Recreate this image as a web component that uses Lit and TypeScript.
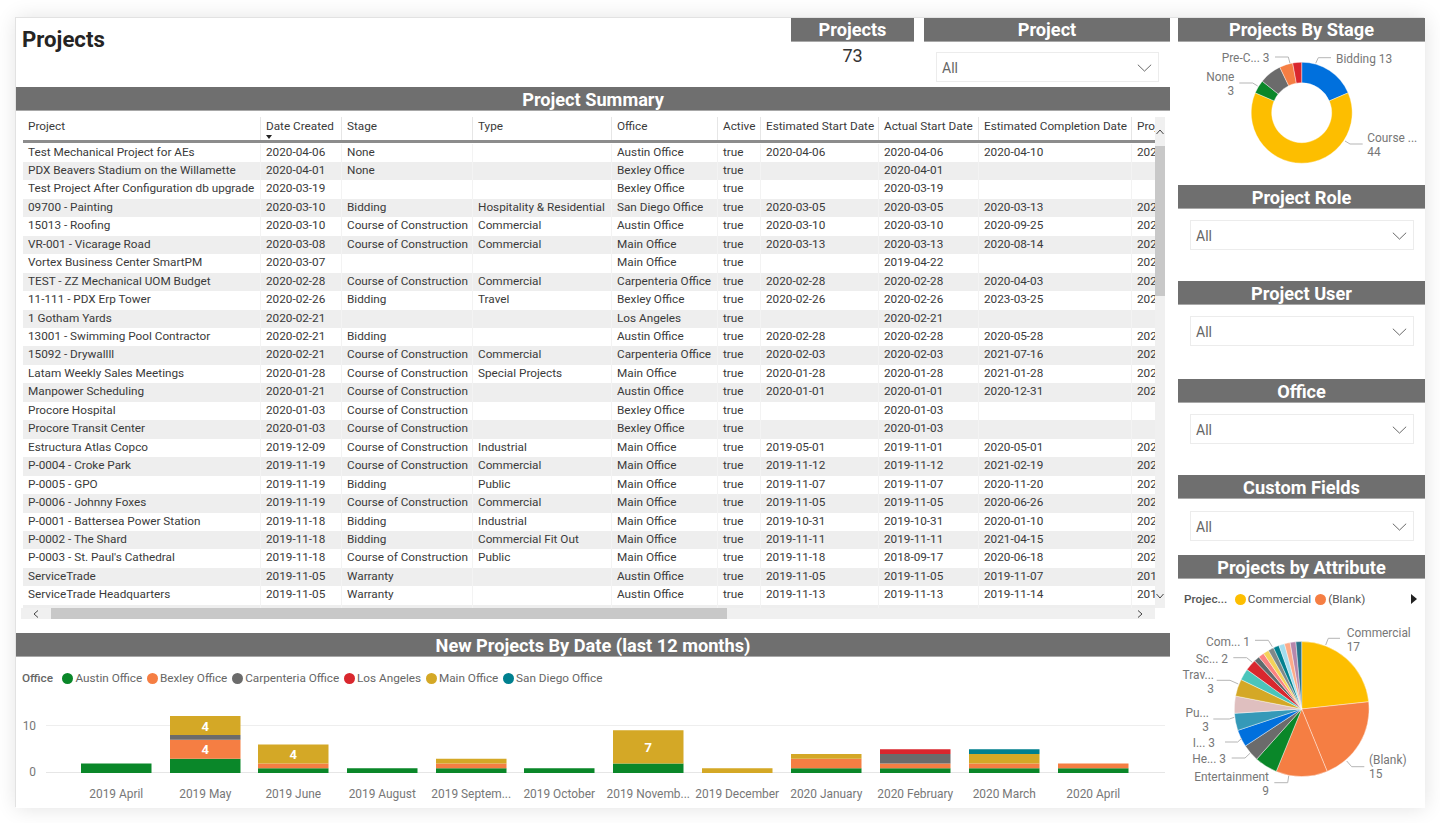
import {LitElement, html, css, svg} from 'lit';
import {customElement} from 'lit/decorators.js';

const COC = 'Course of Construction';
// project|created|stage|type|office|active|est start|act start|est completion|next column (cut off)
const ROWS = [
  ['Test Mechanical Project for AEs', '2020-04-06', 'None', '', 'Austin Office', 'true', '2020-04-06', '2020-04-06', '2020-04-10', '202'],
  ['PDX Beavers Stadium on the Willamette', '2020-04-01', 'None', '', 'Bexley Office', 'true', '', '2020-04-01', '', ''],
  ['Test Project After Configuration db upgrade', '2020-03-19', '', '', 'Bexley Office', 'true', '', '2020-03-19', '', ''],
  ['09700 - Painting', '2020-03-10', 'Bidding', 'Hospitality & Residential', 'San Diego Office', 'true', '2020-03-05', '2020-03-05', '2020-03-13', '202'],
  ['15013 - Roofing', '2020-03-10', COC, 'Commercial', 'Austin Office', 'true', '2020-03-10', '2020-03-10', '2020-09-25', '202'],
  ['VR-001 - Vicarage Road', '2020-03-08', COC, 'Commercial', 'Main Office', 'true', '2020-03-13', '2020-03-13', '2020-08-14', '202'],
  ['Vortex Business Center SmartPM', '2020-03-07', '', '', 'Main Office', 'true', '', '2019-04-22', '', '202'],
  ['TEST - ZZ Mechanical UOM Budget', '2020-02-28', COC, 'Commercial', 'Carpenteria Office', 'true', '2020-02-28', '2020-02-28', '2020-04-03', '202'],
  ['11-111 - PDX Erp Tower', '2020-02-26', 'Bidding', 'Travel', 'Bexley Office', 'true', '2020-02-26', '2020-02-26', '2023-03-25', '202'],
  ['1 Gotham Yards', '2020-02-21', '', '', 'Los Angeles', 'true', '', '2020-02-21', '', ''],
  ['13001 - Swimming Pool Contractor', '2020-02-21', 'Bidding', '', 'Austin Office', 'true', '2020-02-28', '2020-02-28', '2020-05-28', '202'],
  ['15092 - Drywallll', '2020-02-21', COC, 'Commercial', 'Carpenteria Office', 'true', '2020-02-03', '2020-02-03', '2021-07-16', '202'],
  ['Latam Weekly Sales Meetings', '2020-01-28', COC, 'Special Projects', 'Main Office', 'true', '2020-01-28', '2020-01-28', '2021-01-28', '202'],
  ['Manpower Scheduling', '2020-01-21', COC, '', 'Austin Office', 'true', '2020-01-01', '2020-01-01', '2020-12-31', '202'],
  ['Procore Hospital', '2020-01-03', COC, '', 'Bexley Office', 'true', '', '2020-01-03', '', ''],
  ['Procore Transit Center', '2020-01-03', COC, '', 'Bexley Office', 'true', '', '2020-01-03', '', ''],
  ['Estructura Atlas Copco', '2019-12-09', COC, 'Industrial', 'Main Office', 'true', '2019-05-01', '2019-11-01', '2020-05-01', '202'],
  ['P-0004 - Croke Park', '2019-11-19', COC, 'Commercial', 'Main Office', 'true', '2019-11-12', '2019-11-12', '2021-02-19', '202'],
  ['P-0005 - GPO', '2019-11-19', 'Bidding', 'Public', 'Main Office', 'true', '2019-11-07', '2019-11-07', '2020-11-20', '202'],
  ['P-0006 - Johnny Foxes', '2019-11-19', COC, 'Commercial', 'Main Office', 'true', '2019-11-05', '2019-11-05', '2020-06-26', '202'],
  ['P-0001 - Battersea Power Station', '2019-11-18', 'Bidding', 'Industrial', 'Main Office', 'true', '2019-10-31', '2019-10-31', '2020-01-10', '202'],
  ['P-0002 - The Shard', '2019-11-18', 'Bidding', 'Commercial Fit Out', 'Main Office', 'true', '2019-11-11', '2019-11-11', '2021-04-15', '202'],
  ["P-0003 - St. Paul's Cathedral", '2019-11-18', COC, 'Public', 'Main Office', 'true', '2019-11-18', '2018-09-17', '2020-06-18', '202'],
  ['ServiceTrade', '2019-11-05', 'Warranty', '', 'Austin Office', 'true', '2019-11-05', '2019-11-05', '2019-11-07', '201'],
  ['ServiceTrade Headquarters', '2019-11-05', 'Warranty', '', 'Austin Office', 'true', '2019-11-13', '2019-11-13', '2019-11-14', '201'],
  ['', '', '', '', '', '', '', '', '', ''],
];
const COLUMNS = ['Project', 'Date Created', 'Stage', 'Type', 'Office', 'Active', 'Estimated Start Date', 'Actual Start Date', 'Estimated Completion Date', 'Project'];

const GREEN = '#0a8729', ORANGE = '#f57e43', GREY = '#6b6b6b', RED = '#d9272e', GOLD = '#d4a826', TEAL = '#00808f';
const OFFICES = [['Austin Office', GREEN], ['Bexley Office', ORANGE], ['Carpenteria Office', GREY], ['Los Angeles', RED], ['Main Office', GOLD], ['San Diego Office', TEAL]];
const MONTHS: [string, number, [string, number][]][] = [
  ['2019 April', 81, [[GREEN, 2]]],
  ['2019 May', 170, [[GREEN, 3], [ORANGE, 4], [GREY, 1], [GOLD, 4]]],
  ['2019 June', 258, [[GREEN, 1], [ORANGE, 1], [GOLD, 4]]],
  ['2019 August', 347, [[GREEN, 1]]],
  ['2019 Septem...', 436, [[GREEN, 1], [ORANGE, 1], [GOLD, 1]]],
  ['2019 October', 524, [[GREEN, 1]]],
  ['2019 Novemb...', 613, [[GREEN, 2], [GOLD, 7]]],
  ['2019 December', 702, [[GOLD, 1]]],
  ['2020 January', 791, [[GREEN, 1], [ORANGE, 2], [GOLD, 1]]],
  ['2020 February', 880, [[GREEN, 1], [ORANGE, 1], [GREY, 2], [RED, 1]]],
  ['2020 March', 969, [[GREEN, 1], [ORANGE, 1], [GOLD, 2], [TEAL, 1]]],
  ['2020 April', 1058, [[GREEN, 1], [ORANGE, 1]]],
];

const STAGES: [number, string][] = [[13, '#0070dd'], [44, '#fdbe00'], [3, GREEN], [5, GREY], [3, ORANGE], [2, RED]];
const ATTRIBUTES: [number, string][] = [
  [17, '#fdbe00'], [15, ORANGE], [9, ORANGE], [4, GREEN], [3, GREY], [3, '#0070dd'], [3, '#3599b8'], [3, '#dfbfbf'], [3, GOLD],
  [2, '#4ac5bb'], [2, RED], [1, '#5f6b6d'], [1, '#fb8281'], [1, '#f4d25a'], [1, '#7f898a'], [1, '#00808f'], [1, '#a4ddee'], [1, '#fdab89'], [1, '#b687ac'], [1, '#28738a'],
];

function slices(data: [number, string][], cx: number, cy: number, r: number, inner = 0) {
  const total = data.reduce((sum, d) => sum + d[0], 0);
  const pt = (a: number, rad: number) => `${(cx + rad * Math.sin(a)).toFixed(2)} ${(cy - rad * Math.cos(a)).toFixed(2)}`;
  let from = 0;
  return data.map(([value, color]) => {
    const to = from + value / total * Math.PI * 2;
    const big = to - from > Math.PI ? 1 : 0;
    const d = inner
      ? `M${pt(from, r)}A${r} ${r} 0 ${big} 1 ${pt(to, r)}L${pt(to, inner)}A${inner} ${inner} 0 ${big} 0 ${pt(from, inner)}Z`
      : `M${cx} ${cy}L${pt(from, r)}A${r} ${r} 0 ${big} 1 ${pt(to, r)}Z`;
    from = to;
    return svg`<path d=${d} fill=${color} stroke="#fff" stroke-width=".4"></path>`;
  });
}

const chevron = () => html`<svg class="chev" viewBox="0 0 16 9"><path d="M.5 .8 8 8 15.5 .8" fill="none" stroke="#555" stroke-width="1"></path></svg>`;
const dropdown = () => html`<div class="drop"><span>All</span>${chevron()}</div>`;

@customElement('app-root')
export class AppRoot extends LitElement {
  static styles = css`
    :host {
      display: block;
      width: 1440px;
      height: 823px;
      overflow: hidden;
      background: #fff;
      font-family: Roboto, "Open Sans", sans-serif;
      color: #3a3a3a;
    }
    .page {
      display: grid;
      grid-template-columns: 1154px 247px;
      column-gap: 8px;
      width: 1409px;
      height: 790px;
      margin: 18px 0 0 16px;
      background: #fff;
      box-shadow: -1px -1px 0 #e2e2e2, 0 0 20px rgba(0, 0, 0, .12);
      overflow: hidden;
    }
    .bar {
      height: 23px;
      line-height: 26px;
      overflow: hidden;
      background: #6f6f6f;
      border-bottom: 1px solid #a8a8a8;
      color: #fff;
      font-size: 18.2px;
      font-weight: 700;
      text-align: center;
      white-space: nowrap;
    }
    .top .bar, .stage .bar { line-height: 24px; }
    .top {
      display: flex;
      height: 69px;
    }
    .title {
      flex: 1;
      padding: 6px 0 0 6px;
      font-size: 22.2px;
      font-weight: 700;
      line-height: 30px;
      color: #252423;
    }
    .kpi { width: 123px; }
    .kpi .value {
      padding-top: 3px;
      font-size: 18px;
      line-height: 22px;
      text-align: center;
      color: #333;
    }
    .slicer { width: 246px; margin-left: 10px; }
    .slicer .drop { margin: 10px 11px 0 12px; }
    .drop {
      display: flex;
      align-items: center;
      justify-content: space-between;
      box-sizing: border-box;
      height: 30px;
      padding: 2px 6px 0 5px;
      border: 1px solid #ececec;
      font-size: 14px;
      color: #666;
    }
    .chev { width: 15px; height: 8px; }

    .table-area {
      display: flex;
      height: 491px;
      padding: 6px 4px 0 7px;
    }
    .grid {
      width: 1132px;
      overflow: hidden;
    }
    .row {
      display: grid;
      grid-template-columns: 237px 81px 131px 139px 106px 43px 118px 100px 153px 24px;
      font-size: 11.75px;
    }
    .row > div {
      overflow: hidden;
      white-space: nowrap;
      padding-left: 5px;
      box-sizing: border-box;
      border-left: 1px solid #f3f3f3;
    }
    .row > div:first-child { border-left: 0; }
    .head {
      height: 26px;
      border-bottom: 3px solid #8c8c8c;
      box-sizing: border-box;
    }
    .head > div {
      line-height: 19px;
      border-left: 1px solid #e6e6e6;
      position: relative;
    }
    .caret {
      position: absolute;
      left: 5px;
      top: 18px;
      width: 0;
      height: 0;
      border: 3.5px solid transparent;
      border-top: 4px solid #222;
      border-bottom: 0;
    }
    .body .row {
      height: 18.46px;
      line-height: 17px;
    }
    .body { padding-top: .5px; height: 466px; overflow: hidden; }
    .body .row:nth-child(even) { background: #eeeeee; }
    .vscroll {
      display: flex;
      flex-direction: column;
      width: 10px;
      background: #f0f0f0;
      align-items: stretch;
    }
    .arrow {
      display: flex;
      align-items: center;
      justify-content: center;
    }
    .arrow svg { width: 8px; height: 8px; }
    .vscroll .up { height: 29px; }
    .vscroll .thumb { height: 150px; background: #c8c8c8; }
    .vscroll .rest { flex: 1; }
    .vscroll .down { height: 24px; }
    .hscroll {
      display: flex;
      height: 11px;
      width: 1134px;
      margin: 0 0 14px 5px;
      background: #f0f0f0;
    }
    .hscroll .left { width: 30px; }
    .hscroll .thumb { width: 676px; background: #c8c8c8; }
    .hscroll .rest { flex: 1; }
    .hscroll .right { width: 30px; }

    .legend {
      display: flex;
      align-items: center;
      height: 42px;
      padding: 0 0 0 6px;
      font-size: 11.75px;
      color: #666;
      white-space: nowrap;
    }
    .legend b { font-weight: 500; margin-right: 7px; }
    .legend .item { display: flex; align-items: center; margin: 0 2.4px; }
    .dot {
      width: 11px;
      height: 11px;
      border-radius: 50%;
      margin-right: 2px;
    }
    svg.chart {
      display: block;
      font-family: Roboto, sans-serif;
      font-size: 11.9px;
      fill: #777;
    }
    .leader { fill: none; stroke: #b5b5b5; stroke-width: 1; }
    .seg-label { fill: #fff; font-weight: 700; font-size: 13px; text-anchor: middle; }
    .axis { text-anchor: middle; }

    .stage { height: 167px; }
    .sec96 { height: 96px; }
    .sec98 { height: 98px; }
    .sec80 { height: 80px; }
    .sec96 .drop, .sec98 .drop, .sec80 .drop { margin: 11px 11px 0 12px; }
    .sec80 .drop { margin-top: 12px; }
    .legend.attr { height: 40px; padding-right: 8px; color: #555; }
    .legend.attr b { margin-right: 5.500px; }
    .legend.attr .item { margin: 0 2px; }
    .legend.attr .next { margin-left: auto; }
  `;

  private renderRow(row: string[]) {
    return html`<div class="row">${row.map((c) => html`<div>${c}</div>`)}</div>`;
  }

  private renderTable() {
    return html`
      <div class="table-area">
        <div class="grid">
          <div class="row head">
            ${COLUMNS.map((c, i) => html`<div>${c}${i === 1 ? html`<span class="caret"></span>` : ''}</div>`)}
          </div>
          <div class="body">${ROWS.map((r) => this.renderRow(r))}</div>
        </div>
        <div class="vscroll">
          <div class="arrow up"><svg viewBox="0 0 8 8"><path d="M.5 6 4 2 7.500 6" fill="none" stroke="#444"></path></svg></div>
          <div class="thumb"></div>
          <div class="rest"></div>
          <div class="arrow down"><svg viewBox="0 0 8 8"><path d="M.5 2 4 6 7.500 2" fill="none" stroke="#444"></path></svg></div>
        </div>
      </div>
      <div class="hscroll">
        <div class="arrow left"><svg viewBox="0 0 8 8"><path d="M6 .5 2 4 6 7.500" fill="none" stroke="#444"></path></svg></div>
        <div class="thumb"></div>
        <div class="rest"></div>
        <div class="arrow right"><svg viewBox="0 0 8 8"><path d="M2 .5 6 4 2 7.500" fill="none" stroke="#444"></path></svg></div>
      </div>
    `;
  }

  private renderBars() {
    const base = 773, unit = 4.75, width = 70.5;
    return html`
      <svg class="chart" width="1154" height="109" viewBox="16 699 1154 109">
        <line x1="46" x2="1165" y1="725.500" y2="725.500" stroke="#eeeeee"></line>
        <line x1="46" x2="1165" y1="772.500" y2="772.500" stroke="#e6e6e6"></line>
        <text x="36" y="730" text-anchor="end">10</text>
        <text x="36" y="776" text-anchor="end">0</text>
        ${MONTHS.map(([label, x, segs]) => {
          let y = base;
          const parts = segs.map(([color, n]) => {
            const h = n * unit;
            y -= h;
            return svg`<rect x=${x} y=${y} width=${width} height=${h} fill=${color}></rect>
              ${n >= 4 ? svg`<text class="seg-label" x=${x + width / 2} y=${y + h / 2 + 5}>${n}</text>` : ''}`;
          });
          return svg`${parts}<text class="axis" x=${x + width / 2} y="798">${label}</text>`;
        })}
      </svg>
    `;
  }

  private renderDonut() {
    return html`
      <svg class="chart" width="247" height="143" viewBox="1178 42 247 143">
        ${slices(STAGES, 1301.7, 112.7, 50.5, 30)}
        <polyline class="leader" points="1331,57.700 1318.300,57.700 1315.700,63.300"></polyline>
        <polyline class="leader" points="1275,57 1288.300,57 1290,63.300"></polyline>
        <polyline class="leader" points="1239.300,83 1252.700,83 1257.700,86"></polyline>
        <polyline class="leader" points="1362.700,144 1350,144 1345,141"></polyline>
        <text x="1336" y="63">Bidding 13</text>
        <text x="1221.700" y="62">Pre-C... 3</text>
        <text x="1234.300" y="81" text-anchor="end">None</text>
        <text x="1234.300" y="95" text-anchor="end">3</text>
        <text x="1367.300" y="142">Course ...</text>
        <text x="1367.300" y="156">44</text>
      </svg>
    `;
  }

  private renderPie() {
    const labels: [number, number, string, string?][] = [
      [1346.7, 637, 'Commercial'], [1346.7, 651, '17'],
      [1369, 764, '(Blank)'], [1369, 778, '15'],
      [1269, 781, 'Entertainment', 'end'], [1269, 795, '9', 'end'],
      [1226, 763, 'He... 3', 'end'],
      [1215, 747, 'I... 3', 'end'],
      [1209, 717, 'Pu...', 'end'], [1209, 731, '3', 'end'],
      [1214, 679, 'Trav...', 'end'], [1214, 693, '3', 'end'],
      [1228, 663, 'Sc... 2', 'end'],
      [1250, 646, 'Com... 1', 'end'],
    ];
    const leaders = [
      '1340,638.300 1328.300,638.300 1325.700,645',
      '1364.300,766.700 1351.700,766.700 1346.700,761',
      '1274.300,782.700 1287.700,782.700 1288.700,776',
      '1231.700,758 1245,758 1250,753.300',
      '1225,742 1237.700,742 1241.700,738.300',
      '1213.300,719 1229.300,719 1234.300,717.300',
      '1216.700,680.300 1230,680.300 1238.300,684',
      '1233.300,657.700 1246.700,657.700 1252.300,662.300',
      '1255,640.300 1268.300,640.300 1272.300,646.700',
    ];
    return html`
      <svg class="chart" width="247" height="189" viewBox="1178 619 247 189">
        ${slices(ATTRIBUTES, 1301.7, 709, 67.4)}
        ${leaders.map((p) => svg`<polyline class="leader" points=${p}></polyline>`)}
        ${labels.map(([x, y, t, a]) => svg`<text x=${x} y=${y} text-anchor=${a ?? 'start'}>${t}</text>`)}
      </svg>
    `;
  }

  override render() {
    return html`
      <div class="page">
        <div class="main">
          <div class="top">
            <div class="title">Projects</div>
            <div class="kpi">
              <div class="bar">Projects</div>
              <div class="value">73</div>
            </div>
            <div class="slicer">
              <div class="bar">Project</div>
              ${dropdown()}
            </div>
          </div>
          <div class="bar">Project Summary</div>
          ${this.renderTable()}
          <div class="bar">New Projects By Date (last 12 months)</div>
          <div class="legend">
            <b>Office</b>
            ${OFFICES.map(([name, color]) => html`<span class="item"><span class="dot" style="background:${color}"></span>${name}</span>`)}
          </div>
          ${this.renderBars()}
        </div>
        <div class="side">
          <div class="stage">
            <div class="bar">Projects By Stage</div>
            ${this.renderDonut()}
          </div>
          <div class="sec96"><div class="bar">Project Role</div>${dropdown()}</div>
          <div class="sec98"><div class="bar">Project User</div>${dropdown()}</div>
          <div class="sec96"><div class="bar">Office</div>${dropdown()}</div>
          <div class="sec80"><div class="bar">Custom Fields</div>${dropdown()}</div>
          <div class="bar">Projects by Attribute</div>
          <div class="legend attr">
            <b>Projec...</b>
            <span class="item"><span class="dot" style="background:#fdbe00"></span>Commercial</span>
            <span class="item"><span class="dot" style="background:#f57e43"></span>(Blank)</span>
            <svg class="next" width="6" height="10" viewBox="0 0 6 10"><path d="M0 0 6 5 0 10Z" fill="#222"></path></svg>
          </div>
          ${this.renderPie()}
        </div>
      </div>
    `;
  }
}
